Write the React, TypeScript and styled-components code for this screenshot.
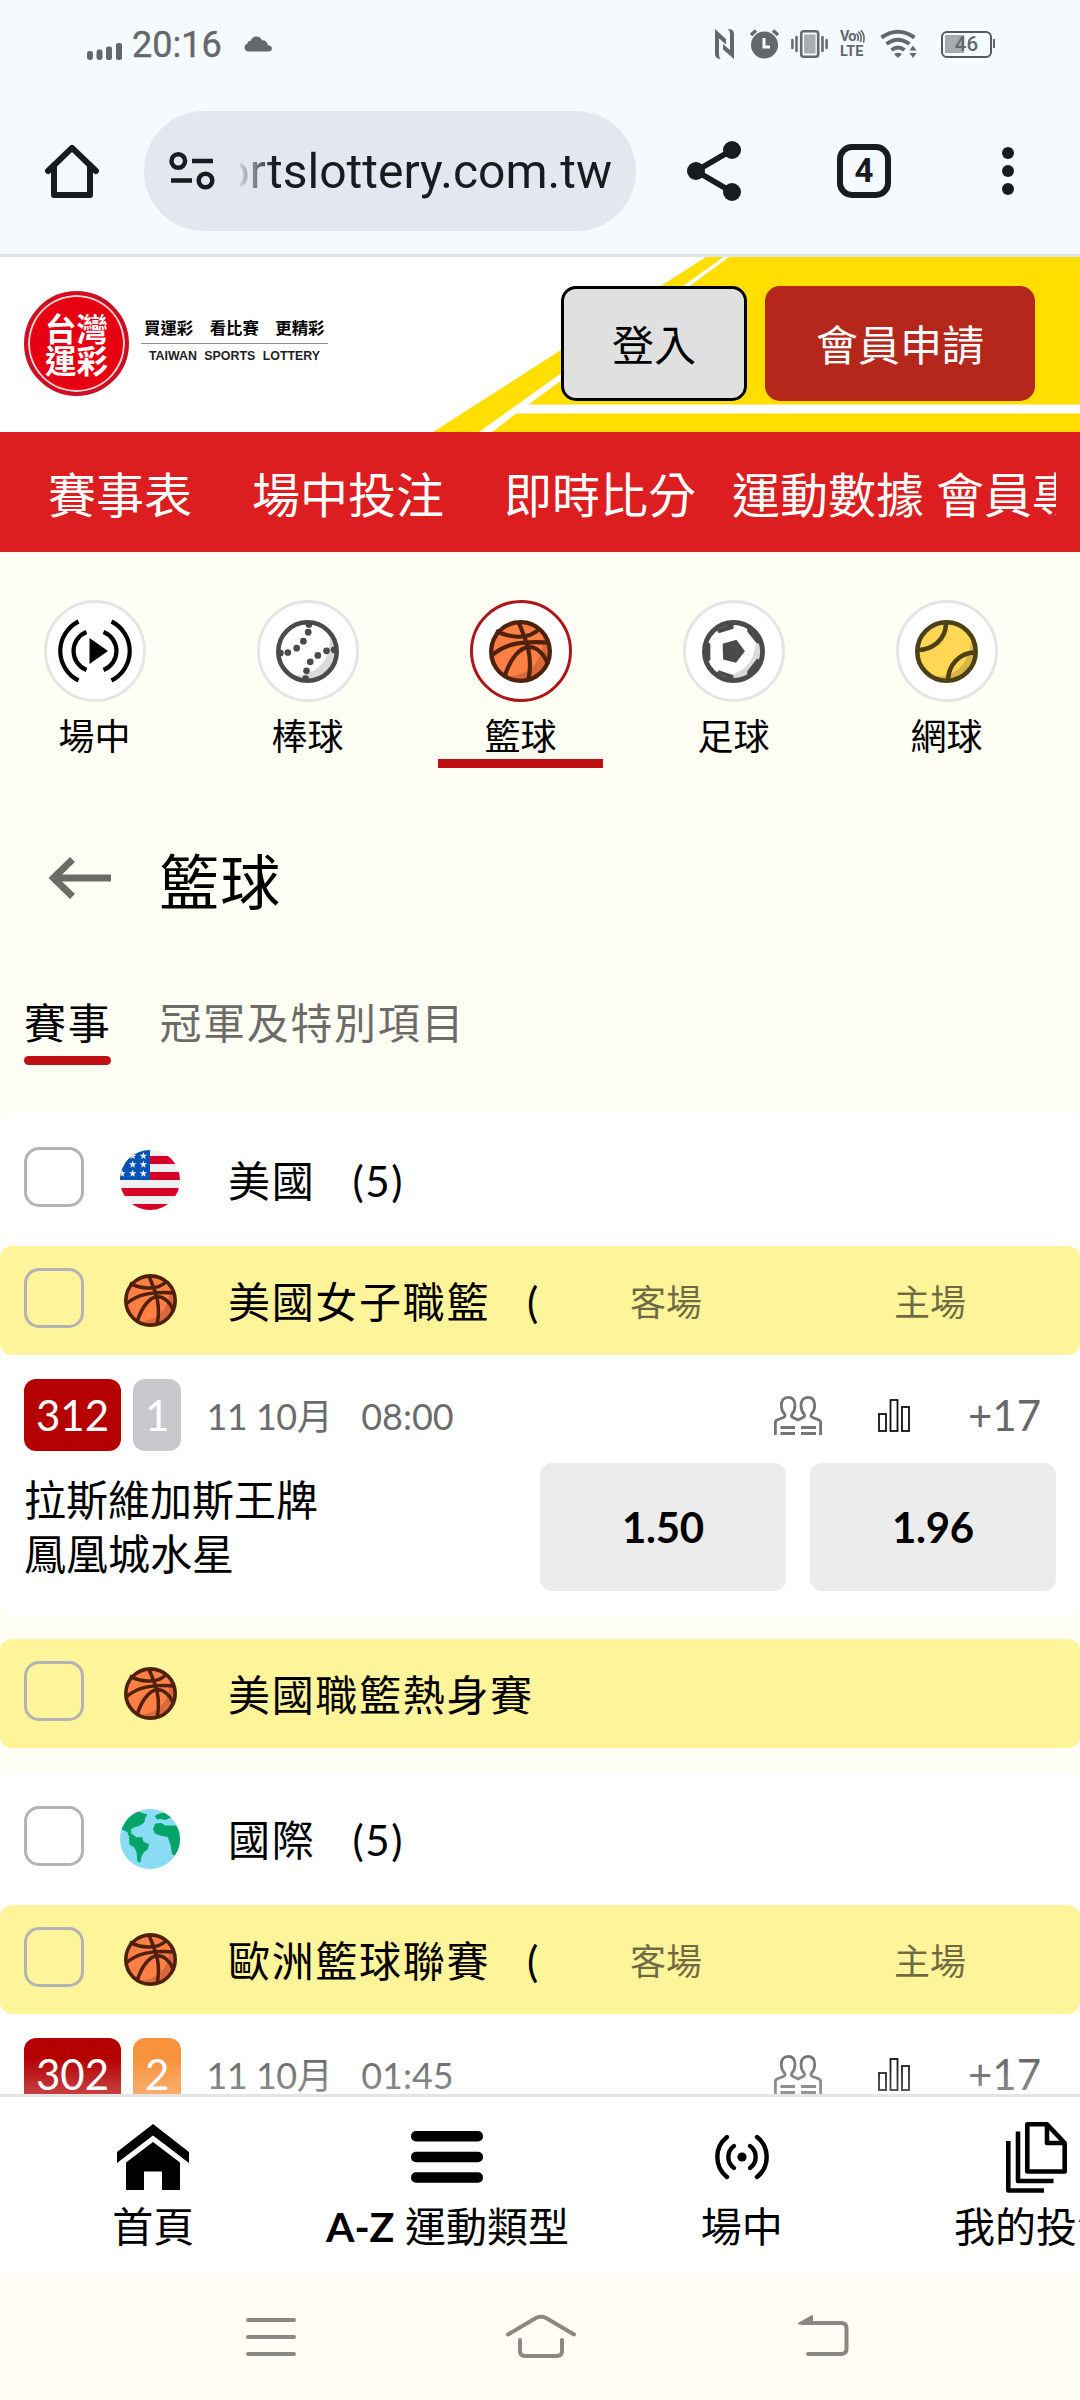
import React from "react";
import styled, { createGlobalStyle, css } from "styled-components";

const GlobalStyle = createGlobalStyle`
  * { box-sizing: border-box; }
  html, body { margin: 0; padding: 0; }
  body { background: #fffef5; font-family: Lato, "Noto Sans CJK TC", sans-serif; color: #000; }
  svg { display: block; flex: none; overflow: visible; }
`;

const Page = styled.div`
  width: 1080px;
  height: 2400px;
  overflow: hidden;
  display: flex;
  flex-direction: column;
  background: #fffef5;
`;

/* ---------- Status bar ---------- */
const StatusBar = styled.div`
  height: 84px;
  flex: none;
  background: #f5fafe;
  padding: 4px 88px 0 87px;
  display: flex;
  align-items: center;
  font-family: Roboto, sans-serif;
  color: #65686b;
`;
const Clock = styled.span`
  font-size: 36px;
  line-height: 40px;
  margin: 2px 0 0 10px;
  -webkit-text-stroke: 0.4px #65686b;
`;
const StatusIcons = styled.div`
  margin-left: auto;
  display: flex;
  align-items: center;
`;
const IconSlot = styled.div<{ $left?: number }>`
  display: flex;
  margin-left: ${(p) => p.$left ?? 0}px;
`;
const VolteMark = styled.div`
  width: 27px;
  margin-left: 12px;
  display: flex;
  flex-direction: column;
  font-weight: 700;
  font-size: 14.5px;
  line-height: 15px;
`;
const VolteTop = styled.div`
  display: flex;
  align-items: center;
  letter-spacing: -0.8px;
`;
const Battery = styled.div`
  position: relative;
  width: 51px;
  height: 27px;
  margin-left: 24px;
  border: 2.5px solid #56595b;
  border-radius: 6px;
  display: flex;
  align-items: center;
  justify-content: center;
  font-size: 20.5px;
  font-weight: 500;
  background: linear-gradient(#a7abae, #a7abae) 2px 2px / 19px 18px no-repeat;
  &::after {
    content: "";
    position: absolute;
    right: -5px;
    top: 6px;
    width: 2px;
    height: 9px;
    background: #65686b;
  }
`;

/* ---------- Browser toolbar ---------- */
const Toolbar = styled.div`
  height: 173px;
  flex: none;
  background: #f5fafe;
  border-bottom: 3px solid #dee3e7;
  padding: 27px 66px 0 45px;
  display: flex;
  align-items: flex-start;
`;
const ToolSlot = styled.div<{ $left?: number; $width: number }>`
  width: ${(p) => p.$width}px;
  margin-left: ${(p) => p.$left ?? 0}px;
  height: 120px;
  display: flex;
  align-items: center;
  justify-content: center;
`;
const UrlPill = styled.div`
  width: 492px;
  height: 120px;
  margin-left: 45px;
  border-radius: 60px;
  background: #e3e8f0;
  display: flex;
  align-items: center;
  padding: 0 24px 0 25px;
`;
const UrlText = styled.div`
  width: 372px;
  margin: 2px 0 0 25px;
  overflow: hidden;
  display: flex;
  justify-content: flex-end;
  font-family: Roboto, sans-serif;
  font-size: 48px;
  line-height: 60px;
  color: #171c1f;
  white-space: nowrap;
  mask-image: linear-gradient(90deg, rgba(0, 0, 0, 0.1), #000 34px);
`;
const TabCount = styled.div`
  width: 54px;
  height: 54px;
  border: 6px solid #171c1f;
  border-radius: 15px;
  display: flex;
  align-items: center;
  justify-content: center;
  font: 700 33px/42px Roboto, sans-serif;
  color: #171c1f;
`;

/* ---------- Site header ---------- */
const SiteHeader = styled.header`
  position: relative;
  height: 175px;
  flex: none;
  background: #fff;
  display: flex;
  align-items: flex-start;
`;
const Swoosh = styled.svg`
  position: absolute;
  inset: 0;
`;
const Seal = styled.div`
  width: 105px;
  height: 105px;
  margin: 34px 0 0 24px;
  border-radius: 50%;
  background: #e60012;
  border: 4px solid #ce0f22;
  box-shadow: inset 0 0 0 2px #fbd5d5;
  display: flex;
  flex-direction: column;
  align-items: center;
  justify-content: center;
  color: #fff;
  font: 700 31.5px/32px "Noto Sans CJK TC", sans-serif;
  padding-bottom: 2px;
`;
const Tagline = styled.div`
  width: 187px;
  margin: 59px 0 0 12px;
  display: flex;
  flex-direction: column;
`;
const TaglineZh = styled.div`
  display: flex;
  gap: 16.5px;
  padding: 0 3px 5px;
  border-bottom: 1.5px solid #8b8b8b;
  font: 700 16.4px/22px "Noto Sans CJK TC", sans-serif;
  white-space: nowrap;
`;
const TaglineEn = styled.div`
  font: 700 12.4px/14px "Liberation Sans", sans-serif;
  margin-top: 5px;
  text-align: center;
  word-spacing: 4px;
  white-space: nowrap;
  color: #222;
`;
const HeaderButton = styled.button<{ $primary?: boolean }>`
  position: relative;
  width: ${(p) => (p.$primary ? 270 : 186)}px;
  height: 115px;
  margin: 29px 0 0 ${(p) => (p.$primary ? 18 : 233)}px;
  padding: 2px 0 0;
  border-radius: 15px;
  border: 3px solid ${(p) => (p.$primary ? "#b5271b" : "#000")};
  background: ${(p) => (p.$primary ? "#b5271b" : "#e0e0e0")};
  color: ${(p) => (p.$primary ? "#fff" : "#000")};
  font: 400 42px/50px Lato, "Noto Sans CJK TC", sans-serif;
`;

/* ---------- Red navigation ---------- */
const RedNav = styled.nav`
  height: 120px;
  flex: none;
  background: #dc1e20;
  padding: 0 24px 0 48px;
`;
const RedNavTrack = styled.div`
  display: flex;
  height: 120px;
  align-items: center;
  overflow: hidden;
  padding-top: 6px;
`;
const RedNavItem = styled.span<{ $gap?: number }>`
  flex: none;
  color: #fff;
  font-size: 48px;
  line-height: 60px;
  margin-right: ${(p) => p.$gap ?? 0}px;
`;

/* ---------- Sport picker ---------- */
const Sports = styled.div`
  height: 216px;
  flex: none;
  padding: 48px 0 0 12px;
  display: flex;
  gap: 48px;
`;
const SportItem = styled.div<{ $active?: boolean }>`
  width: 165px;
  height: 168px;
  flex: none;
  display: flex;
  flex-direction: column;
  align-items: center;
  border-bottom: 9px solid ${(p) => (p.$active ? "#bf1013" : "transparent")};
`;
const SportDisc = styled.div<{ $active?: boolean }>`
  width: 102px;
  height: 102px;
  flex: none;
  border-radius: 50%;
  background: #fff;
  border: 3px solid ${(p) => (p.$active ? "#ad1519" : "#e5e5e5")};
  display: flex;
  align-items: center;
  justify-content: center;
`;
const SportLabel = styled.span`
  font-size: 36px;
  line-height: 44px;
  margin-top: 12px;
`;

/* ---------- Title and tabs ---------- */
const TitleRow = styled.div`
  height: 128px;
  flex: none;
  margin-top: 46px;
  margin-bottom: 2px;
  padding: 0 48px;
  display: flex;
  align-items: center;
`;
const Title = styled.h1`
  margin: 8px 0 0 48px;
  font-size: 60px;
  line-height: 72px;
  font-weight: 400;
  letter-spacing: 0.02em;
`;
const Tabs = styled.div`
  height: 168px;
  flex: none;
  padding: 52px 24px 0;
  display: flex;
  gap: 48px;
  align-items: flex-start;
`;
const Tab = styled.div<{ $active?: boolean }>`
  font-size: 42px;
  line-height: 54px;
  letter-spacing: 0.04em;
  color: ${(p) => (p.$active ? "#000" : "#6c6b67")};
  ${(p) =>
    p.$active &&
    css`
      &::after {
        content: "";
        display: block;
        height: 9px;
        margin-top: 6px;
        border-radius: 5px;
        background: #bf1013;
      }
    `}
`;

/* ---------- Listings ---------- */
const Listing = styled.main`
  flex: 1;
  min-height: 0;
  overflow: hidden;
`;
const Panel = styled.section<{ $bottom?: number }>`
  background: #fff;
  border-radius: 12px;
  margin-bottom: ${(p) => p.$bottom ?? 0}px;
`;
const CountryRow = styled.div`
  height: 134px;
  padding: 0 24px;
  display: flex;
  align-items: center;
`;
const LeagueRow = styled.div<{ $bottom?: number }>`
  height: 109px;
  padding: 0 24px 2px;
  border-radius: 12px;
  background: #fef49a;
  display: flex;
  align-items: center;
  margin-bottom: ${(p) => p.$bottom ?? 0}px;
`;
const Check = styled.span`
  width: 60px;
  height: 60px;
  flex: none;
  margin-bottom: 4px;
  border: 3px solid #b3b3b3;
  border-radius: 15px;
`;
const FlagSlot = styled.span`
  width: 60px;
  margin: 2px 48px 0 36px;
  display: flex;
  justify-content: center;
`;
const RowName = styled.span<{ $clip?: boolean }>`
  width: ${(p) => (p.$clip ? "312px" : "auto")};
  overflow: hidden;
  white-space: nowrap;
  font-size: 42px;
  line-height: 56px;
  letter-spacing: 0.04em;
  margin-top: 4px;
`;
const Count = styled.span`
  margin-left: 37px;
`;
const SideHeads = styled.div`
  margin: 5px 0 0;
  flex: none;
  display: grid;
  grid-template-columns: 252px 252px;
  gap: 12px;
  text-align: center;
  font-size: 36px;
  line-height: 44px;
  color: rgba(0, 0, 0, 0.56);
`;
const Match = styled.article`
  padding: 24px 24px 0;
  height: 261px;
`;
const MatchMeta = styled.div`
  display: flex;
  align-items: center;
  height: 72px;
`;
const Badge = styled.span<{ $color: string }>`
  height: 72px;
  padding: 0 12px;
  border-radius: 12px;
  margin-right: 12px;
  background: ${(p) => p.$color};
  color: #fff;
  font-size: 42px;
  line-height: 72px;
`;
const When = styled.span<{ $left: number; $tight?: boolean }>`
  margin-left: ${(p) => p.$left}px;
  letter-spacing: ${(p) => (p.$tight ? "-0.5px" : "0")};
  color: #6b6b6b;
  font-size: 36px;
  line-height: 44px;
  padding-top: 2px;
`;
const MetaTools = styled.div`
  margin-left: auto;
  display: flex;
  align-items: center;
`;
const More = styled.span`
  width: 75px;
  margin-left: 58px;
  margin-right: 13px;
  color: #686868;
  font-size: 42px;
  line-height: 50px;
`;
const MatchBody = styled.div`
  display: flex;
  margin-top: 12px;
`;
const Teams = styled.div`
  width: 516px;
  padding-top: 10px;
  font-size: 42px;
  line-height: 54px;
`;
const Odd = styled.button`
  width: 246px;
  height: 128px;
  border: 0;
  margin: 0;
  padding: 0;
  border-radius: 12px;
  background: #ececec;
  color: #000;
  font: 700 42px/50px Lato, sans-serif;
  letter-spacing: -0.3px;
  & + & {
    margin-left: 24px;
  }
`;

/* ---------- Bottom bar ---------- */
const BottomBar = styled.nav`
  position: relative;
  height: 179px;
  flex: none;
  border-top: 3px solid #e4e4e5;
  background: #fff;
  padding-left: 6px;
  display: flex;
  &::before {
    content: "";
    position: absolute;
    left: 0;
    right: 0;
    top: -39px;
    height: 36px;
    background: linear-gradient(rgba(255, 255, 255, 0), rgba(255, 255, 255, 0.25));
  }
`;
const BottomItem = styled.div`
  width: 294.3px;
  flex: none;
  display: flex;
  flex-direction: column;
  align-items: center;
  font-size: 41px;
  line-height: 54px;
  white-space: nowrap;
`;
const BottomIcon = styled.div`
  height: 103px;
  padding-top: 17px;
  display: flex;
  align-items: center;
`;
const SystemBar = styled.div`
  height: 127px;
  flex: none;
  background: #fffdf5;
  padding: 41px 0 0 244px;
  display: flex;
  align-items: flex-start;
`;

/* ---------- Drawings ---------- */
const INK = "#171c1f";
const GRAY = "#65686b";

const SignalSvg = styled.svg`
  margin-top: 14px;
`;
const Signal = () => (
  <SignalSvg width="35" height="18" fill={GRAY}>
    <rect x="0" y="9" width="6" height="9" rx="2.4" />
    <rect x="9.5" y="7.5" width="6" height="10.5" rx="2.4" />
    <rect x="19" y="4.5" width="6" height="13.5" rx="2.2" />
    <rect x="29" y="1" width="6" height="17" rx="2" />
  </SignalSvg>
);
const CloudIcon = () => (
  <svg width="28" height="16" viewBox="0 0 28 16" fill={GRAY}>
    <path d="M4 15.5a4 4 0 0 1-.6-7.8C3.500 5 5.500 4.500 6.800 4.700 8 1.500 10 .4 12.300.4c2.800 0 4.700 1.400 5.700 3.900 3.300-.3 5.600 1.800 5.900 5 2.600 0 4.100 1.300 4.100 3.200 0 2-1.500 3-3.400 3z" />
  </svg>
);
const NfcIcon = () => (
  <svg width="19" height="30" viewBox="0 0 19 30" fill={GRAY}>
    <path d="M0 0 11 10V15.500L4 9.500V24.500Q4 29 6 30Q0 30 0 25Z" />
    <path d="M19 30 8 20.500V15L15 21V5Q15 1.500 13 0Q19 0 19 5Z" />
  </svg>
);
const AlarmIcon = () => (
  <svg width="29" height="30" viewBox="0 0 29 30">
    <circle cx="14.500" cy="16" r="13.500" fill={GRAY} />
    <path d="M1 6 6 1.500M28 6 23 1.500" stroke={GRAY} strokeWidth="3.500" />
    <path d="M14 9V18H20" stroke="#f5fafe" strokeWidth="3" fill="none" />
  </svg>
);
const VibrateIcon = () => (
  <svg width="37" height="28" viewBox="0 0 37 28">
    <rect x="10.200" y="1.200" width="17" height="25.600" rx="2.500" fill="#f5fafe" stroke={GRAY} strokeWidth="2.600" />
    <rect x="13" y="4.500" width="11.500" height="19" fill="#a9adb0" />
    <path d="M1.400 10V18M5.500 7V21M31.500 7V21M35.600 10V18" stroke={GRAY} strokeWidth="2.500" strokeLinecap="round" />
  </svg>
);
const WaveMini = () => (
  <svg width="9" height="13" viewBox="0 0 9 13" fill="none" stroke={GRAY} strokeWidth="1.600">
    <path d="M.5 3.500Q3.500 6.500 1.500 11M2.500 1.500Q6.500 5.500 4.500 12M5 .2Q9.500 5.500 7.500 12.500" />
  </svg>
);
const WifiIcon = () => (
  <svg width="37" height="28" viewBox="0 0 37 28" fill="none" stroke={GRAY} strokeWidth="4">
    <path d="M1.500 7.500Q18 -4 34.500 7.500" />
    <path d="M6.500 14Q18 5.500 29.500 14" />
    <path d="M11.500 20Q18 15 24.500 20" />
    <path d="M14 24Q18 21.500 22 24L18 28Z" fill={GRAY} stroke="none" />
    <path d="M29.500 20.500 33 15.500 36.500 20.500ZM29.500 23 33 28 36.500 23Z" fill={GRAY} stroke="none" />
  </svg>
);
const ChromeHome = () => (
  <svg width="54" height="54" viewBox="0 0 54 54" fill="none" stroke={INK} strokeWidth="6" strokeLinejoin="round" strokeLinecap="round">
    <path d="M3 27 27 3.800 51 27" />
    <path d="M9 22V51H45V22" />
  </svg>
);
const TuneIcon = () => (
  <svg width="46" height="38" viewBox="0 0 46 38" fill="none" stroke={INK} strokeWidth="4.500">
    <circle cx="9.300" cy="9" r="6.800" />
    <circle cx="36.500" cy="28.500" r="6.800" />
    <path d="M23 9H44M2 28.500H23" />
  </svg>
);
const ShareIcon = () => (
  <svg width="54" height="60" viewBox="0 0 54 60" fill={INK} stroke={INK} strokeWidth="5.600">
    <path d="M45 9 9 30 45 51" fill="none" />
    <g stroke="none">
      <circle cx="45" cy="9" r="9" />
      <circle cx="9" cy="30" r="9" />
      <circle cx="45" cy="51" r="9" />
    </g>
  </svg>
);
const MoreIcon = () => (
  <svg width="12" height="48" fill={INK}>
    <circle cx="6" cy="6" r="6" />
    <circle cx="6" cy="24" r="6" />
    <circle cx="6" cy="42" r="6" />
  </svg>
);

const LivePlay = () => (
  <svg width="72" height="64" viewBox="-36 -32 72 64" fill="none" stroke="#000" strokeWidth="4.200">
    <path d="M-5.500-13 13 0-5.500 13Z" fill="#000" stroke="none" />
    <path d="M-8.500-19A20.400 20.400 0 0 0-8.500 19M8.500-19A20.400 20.400 0 0 1 8.500 19" />
    <path d="M-16.500-29.500A33 33 0 0 0-16.500 29.500M16.500-29.500A33 33 0 0 1 16.500 29.500" />
  </svg>
);
const Baseball = () => (
  <svg width="63" height="63" viewBox="0 0 64 64">
    <circle cx="32" cy="32" r="31" fill="#fff" />
    <path d="M54 12A30 30 0 0 1 14 56Q38 58 50 40Q56 28 54 12Z" fill="#dadada" />
    <g fill="#4a4a4a">
      {[[33.4, 4.5], [32.7, 12.4], [27.8, 21.5], [21, 28.6], [12, 33], [4.5, 33.5], [59, 30.3], [51.3, 31.3], [42.5, 36], [34.8, 42.5], [31, 51.6], [30, 59.5]].map(([x, y]) => (
        <circle key={`${x}-${y}`} cx={x} cy={y} r="3.400" />
      ))}
    </g>
    <circle cx="32" cy="32" r="29.700" fill="none" stroke="#4a4a4a" strokeWidth="4.600" />
  </svg>
);
const Basketball = ({ size }: { size: number }) => (
  <svg width={size} height={size} viewBox="0 0 64 64">
    <circle cx="32" cy="32" r="31" fill="#ff7f45" />
    <path d="M55 14A30 30 0 0 1 18 58Q40 56 49 42Q56 30 55 14Z" fill="#d9693a" />
    <g fill="none" stroke="#4f210b" strokeWidth="4.200">
      <path d="M30 2C34 14 46 32 40 61" />
      <path d="M7 11C18 17 40 22 52 8" />
      <path d="M3 36C16 24 34 21 61 23" />
      <path d="M16 57C22 38 32 28 40 27.500S56 34 60 45" />
      <circle cx="32" cy="32" r="29.800" strokeWidth="4.400" />
    </g>
  </svg>
);
const Football = () => (
  <svg width="63" height="63" viewBox="0 0 64 64">
    <circle cx="32" cy="32" r="31" fill="#fff" />
    <path d="M57 22A28 28 0 0 1 32 60V55Q52 48 54 26Z" fill="#dadada" />
    <g fill="#4a4a4a">
      <path d="M21 24 35 20 43.600 31.700 34.500 43.500 21.500 40Z" />
      <path d="M15 10 17 13.500 32 9V3ZM46 7V12L56 24 60 22Z" />
      <path d="M5 22 8.500 24V41L5 42ZM15 54 17 51 32 56V61ZM46 57V52L56 39 60 42Z" />
    </g>
    <circle cx="32" cy="32" r="29.500" fill="none" stroke="#4a4a4a" strokeWidth="5" />
  </svg>
);
const Tennis = () => (
  <svg width="63" height="63" viewBox="0 0 64 64">
    <circle cx="32" cy="32" r="31" fill="#ffd755" />
    <path d="M57 20A28 28 0 0 1 22 58Q40 56 48 46Q56 36 57 20Z" fill="#d8b546" />
    <g fill="none" stroke="#4c4016" strokeWidth="4.600">
      <path d="M3 30.500C18 30 31 20 31.500 4" />
      <path d="M33.500 61C34 46 45 33 61 33" />
      <circle cx="32" cy="32" r="29.700" />
    </g>
  </svg>
);
const BackArrow = () => (
  <svg width="63" height="42" viewBox="0 0 63 42" fill="none" stroke="#6c6b67" strokeWidth="7">
    <path d="M63 21H5M24.500 2.500 5.500 21 24.500 39.500" />
  </svg>
);

const starPoints = (cx: number, cy: number, r: number) =>
  Array.from({ length: 10 }, (_, i) => {
    const a = -Math.PI / 2 + (i * Math.PI) / 5;
    const q = i % 2 ? r * 0.4 : r;
    return `${(cx + q * Math.cos(a)).toFixed(2)},${(cy + q * Math.sin(a)).toFixed(2)}`;
  }).join(" ");

const UsFlag = () => (
  <svg width="60" height="60" viewBox="0 0 60 60">
    <clipPath id="usdisc"><circle cx="30" cy="30" r="30" /></clipPath>
    <g clipPath="url(#usdisc)">
      <rect width="60" height="60" fill="#f0f0f0" />
      {[6, 22, 38, 54].map((y) => <rect key={y} y={y} width="60" height="8" fill="#d80027" />)}
      <rect width="30" height="30" fill="#0052b4" />
      {[[12.7, 6], [23.4, 6], [12.7, 14.6], [23.4, 14.6], [2, 23.6], [12.7, 23.6], [23.4, 23.6]].map(([x, y]) => (
        <polygon key={`${x}-${y}`} points={starPoints(x, y, 4)} fill="#f0f0f0" />
      ))}
    </g>
  </svg>
);
const Globe = () => (
  <svg width="60" height="60" viewBox="0 0 60 60">
    <clipPath id="globedisc"><circle cx="30" cy="30" r="30" /></clipPath>
    <g clipPath="url(#globedisc)">
      <rect width="60" height="60" fill="#8adcf5" />
      <g fill="#04a467" stroke="#04a467" strokeLinejoin="round">
        <path d="M8 5 18 3 27 6 24.500 9 24 13 20 16 14 18 10.500 20 11 25 14 27H9L8 23 2 20V12Z" />
        <path d="M9.500 28 13 26.500 17 29 22 28.500 23 33 28.500 35.500 27.500 40 23.500 43 21 48 20 53 18 52.500 17 43 14.500 38 10 35.500Z" />
        <path d="M35.500 7 38 5.500 44 4 50.500 8 46 10.500 40 9.500 37 10Z" />
        <path d="M33.500 20 35.500 15 41.500 14.500 45 17 56 17 61 25 59 38 55 46 52.500 45 51 36 48 27.500 40 26 35 24Z" />
      </g>
    </g>
  </svg>
);
const LineupIcon = () => (
  <svg width="48" height="39" viewBox="0 0 48 39" fill="none" stroke="#747474" strokeWidth="2.800">
    <path d="M1.400 39V26Q1.500 25 3 24L9.500 21.500Q12 20.500 10.500 18Q7.300 14.500 7.300 9.500C7.300 4 10 1.300 14.200 1.300S21 4 21 9.500Q21 14.500 18 18Q16.500 20.500 19 21.500L24 24 29 21.500Q31.500 20.500 30 18Q27 14.500 27 9.500C27 4 29.700 1.300 33.900 1.300S40.700 4 40.700 9.500Q40.700 14.500 37.500 18Q36 20.500 38.500 21.500L45 24Q46.600 25 46.600 26V39" />
    <path d="M6.500 31.500H21M27 31.500H42M6.500 37.500H21M27 37.500H42" />
  </svg>
);
const StatsIcon = () => (
  <svg width="32" height="33" viewBox="0 0 32 33" fill="none" stroke="#111" strokeWidth="1.800">
    <rect x="1" y="15" width="7" height="17" />
    <rect x="12.500" y="1" width="7" height="31" />
    <rect x="24" y="8" width="7" height="24" />
  </svg>
);
const HomeSolid = () => (
  <svg width="72" height="66" viewBox="0 0 72 66">
    <path d="M36 0 72 28V39L36 11.500 0 39V28Z" />
    <path d="M36 18 63 38.500V66H45V47.500H27V66H9V38.500Z" />
  </svg>
);
const MenuBars = () => (
  <svg width="72" height="52" viewBox="0 0 72 52">
    <rect width="72" height="10.500" rx="5" />
    <rect y="20.700" width="72" height="10.500" rx="5" />
    <rect y="41.300" width="72" height="10.500" rx="5" />
  </svg>
);
const LiveDot = () => (
  <svg width="54" height="44" viewBox="-27 -22 54 44" fill="none" stroke="#000" strokeWidth="4.400" strokeLinecap="round">
    <circle r="4.600" fill="#000" stroke="none" />
    <path d="M-8-11A13.500 13.500 0 0 0-8 11M8-11A13.500 13.500 0 0 1 8 11" />
    <path d="M-15-20A25.500 25.500 0 0 0-15 20M15-20A25.500 25.500 0 0 1 15 20" />
  </svg>
);
const BetSlips = () => (
  <svg width="61" height="71" viewBox="0 0 61 71" fill="none" stroke="#000" strokeWidth="4.600" strokeLinejoin="round">
    <path d="M21.300 2.300H41L58.700 21V49.500H21.300Z" />
    <path d="M41 2.300V21H58.700" />
    <path d="M12 9.500V59H47.500M2.300 19V68.500H38" />
  </svg>
);
const SysMenu = () => (
  <svg width="54" height="46" viewBox="0 0 54 46" stroke="#8a8884" strokeWidth="4" strokeLinecap="round">
    <path d="M4 6H50M4 23H50M4 40H50" />
  </svg>
);
const SysHome = () => (
  <svg width="70" height="46" viewBox="0 0 70 46" fill="none" stroke="#8a8884" strokeWidth="4" strokeLinecap="round">
    <path d="M2 20.500 29 4.500Q35 1 41 4.500L68 20.500" />
    <path d="M14 26V37Q14 42 19 42H51Q56 42 56 37V26" />
  </svg>
);
const SysBack = () => (
  <svg width="52" height="46" viewBox="0 0 52 46" fill="none" stroke="#8a8884" strokeWidth="4" strokeLinecap="round">
    <path d="M4 9H43Q48.500 9 48.500 14V35Q48.500 40 43 40H10" />
    <path d="M1 9.500 14 2V9.500Z" fill="#8a8884" strokeWidth="2" strokeLinejoin="round" />
  </svg>
);

/* ---------- Composition ---------- */
const sports = [
  { label: "場中", icon: <LivePlay /> },
  { label: "棒球", icon: <Baseball /> },
  { label: "籃球", icon: <Basketball size={63} />, active: true },
  { label: "足球", icon: <Football /> },
  { label: "網球", icon: <Tennis /> },
];

const League = ({ name, sides, bottom }: { name: string; sides?: boolean; bottom?: number }) => (
  <LeagueRow $bottom={bottom}>
    <Check />
    <FlagSlot><Basketball size={53} /></FlagSlot>
    <RowName $clip={sides}>{name}{sides && <Count>(</Count>}</RowName>
    {sides && <SideHeads><span>客場</span><span>主場</span></SideHeads>}
  </LeagueRow>
);

const Country = ({ name, flag }: { name: string; flag: React.ReactNode }) => (
  <CountryRow>
    <Check />
    <FlagSlot>{flag}</FlagSlot>
    <RowName>{name}<Count>(5)</Count></RowName>
  </CountryRow>
);

const MatchHead = ({ code, bets, color, time }: { code: string; bets: string; color: string; time: string }) => (
  <MatchMeta>
    <Badge $color="#b50002">{code}</Badge>
    <Badge $color={color}>{bets}</Badge>
    <When $left={13} $tight>11 10月</When>
    <When $left={29}>{time}</When>
    <MetaTools>
      <LineupIcon />
      <IconSlot $left={56}><StatsIcon /></IconSlot>
      <More>+17</More>
    </MetaTools>
  </MatchMeta>
);

export default function App() {
  return (
    <Page>
      <GlobalStyle />
      <StatusBar>
        <Signal />
        <Clock>20:16</Clock>
        <IconSlot $left={22}><CloudIcon /></IconSlot>
        <StatusIcons>
          <NfcIcon />
          <IconSlot $left={16}><AlarmIcon /></IconSlot>
          <IconSlot $left={12}><VibrateIcon /></IconSlot>
          <VolteMark>
            <VolteTop>Vo<WaveMini /></VolteTop>
            <span>LTE</span>
          </VolteMark>
          <IconSlot $left={13}><WifiIcon /></IconSlot>
          <Battery>46</Battery>
        </StatusIcons>
      </StatusBar>
      <Toolbar>
        <ToolSlot $width={54}><ChromeHome /></ToolSlot>
        <UrlPill>
          <TuneIcon />
          <UrlText>sportslottery.com.tw</UrlText>
        </UrlPill>
        <ToolSlot $width={54} $left={51}><ShareIcon /></ToolSlot>
        <ToolSlot $width={54} $left={96}><TabCount>4</TabCount></ToolSlot>
        <ToolSlot $width={12} $left={111}><MoreIcon /></ToolSlot>
      </Toolbar>

      <SiteHeader>
        <Swoosh width="1080" height="175" viewBox="0 0 1080 175" fill="#ffde00">
          <path d="M433 175 706 0H723.500L479 175Z" />
          <path d="M528.500 147.500 729 0H1080V147.500Z" />
          <path d="M492 175 516 156.500H1080V175Z" />
        </Swoosh>
        <Seal><span>台灣</span><span>運彩</span></Seal>
        <Tagline>
          <TaglineZh><span>買運彩</span><span>看比賽</span><span>更精彩</span></TaglineZh>
          <TaglineEn>TAIWAN SPORTS LOTTERY</TaglineEn>
        </Tagline>
        <HeaderButton>登入</HeaderButton>
        <HeaderButton $primary>會員申請</HeaderButton>
      </SiteHeader>

      <RedNav>
        <RedNavTrack>
          <RedNavItem $gap={60}>賽事表</RedNavItem>
          <RedNavItem $gap={60}>場中投注</RedNavItem>
          <RedNavItem $gap={36}>即時比分</RedNavItem>
          <RedNavItem $gap={12}>運動數據</RedNavItem>
          <RedNavItem>會員專區</RedNavItem>
        </RedNavTrack>
      </RedNav>

      <Sports>
        {sports.map((s) => (
          <SportItem key={s.label} $active={s.active}>
            <SportDisc $active={s.active}>{s.icon}</SportDisc>
            <SportLabel>{s.label}</SportLabel>
          </SportItem>
        ))}
      </Sports>

      <TitleRow>
        <BackArrow />
        <Title>籃球</Title>
      </TitleRow>
      <Tabs>
        <Tab $active>賽事</Tab>
        <Tab>冠軍及特別項目</Tab>
      </Tabs>

      <Listing>
        <Panel $bottom={23}>
          <Country name="美國" flag={<UsFlag />} />
          <League name="美國女子職籃" sides />
          <Match>
            <MatchHead code="312" bets="1" color="#c8c8cf" time="08:00" />
            <MatchBody>
              <Teams><div>拉斯維加斯王牌</div><div>鳳凰城水星</div></Teams>
              <Odd>1.50</Odd>
              <Odd>1.96</Odd>
            </MatchBody>
          </Match>
        </Panel>
        <League name="美國職籃熱身賽" bottom={23} />
        <Panel>
          <Country name="國際" flag={<Globe />} />
          <League name="歐洲籃球聯賽" sides />
          <Match>
            <MatchHead code="302" bets="2" color="#f8923c" time="01:45" />
          </Match>
        </Panel>
      </Listing>

      <BottomBar>
        <BottomItem><BottomIcon><HomeSolid /></BottomIcon>首頁</BottomItem>
        <BottomItem><BottomIcon><MenuBars /></BottomIcon><span><b>A-Z</b> 運動類型</span></BottomItem>
        <BottomItem><BottomIcon><LiveDot /></BottomIcon>場中</BottomItem>
        <BottomItem><BottomIcon><BetSlips /></BottomIcon>我的投注</BottomItem>
      </BottomBar>
      <SystemBar>
        <SysMenu />
        <IconSlot $left={208}><SysHome /></IconSlot>
        <IconSlot $left={222}><SysBack /></IconSlot>
      </SystemBar>
    </Page>
  );
}
